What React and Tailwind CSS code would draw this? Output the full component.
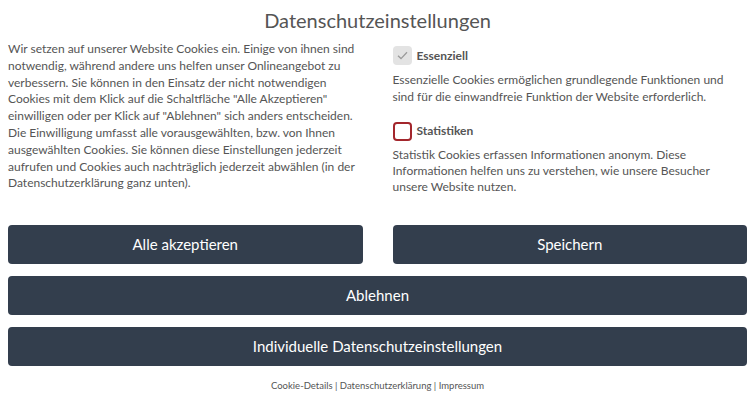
import { useState } from "react";

const font = { fontFamily: "Lato, 'Open Sans', sans-serif" };

const Checkbox = ({ checked, disabled, onChange }) => {
  if (disabled) {
    return (
      <span className="flex h-[19px] w-[19px] shrink-0 items-center justify-center rounded-[4px] bg-[#e3e3e3]">
        <svg width="11" height="9" viewBox="0 0 11 9" fill="none">
          <path d="M1 4.8 L4 7.6 L10 1.2" stroke="#9a9a9a" strokeWidth="1.3" />
        </svg>
      </span>
    );
  }
  return (
    <button
      onClick={onChange}
      className="flex h-[19px] w-[19px] shrink-0 items-center justify-center rounded-[4px] border-2 border-[#a3262c] bg-white"
    >
      {checked && (
        <svg width="11" height="9" viewBox="0 0 11 9" fill="none">
          <path d="M1 4.8 L4 7.6 L10 1.2" stroke="#a3262c" strokeWidth="1.5" />
        </svg>
      )}
    </button>
  );
};

export default function App() {
  const [stats, setStats] = useState(false);

  return (
    <div style={font} className="min-h-[398px] w-full bg-white px-2 text-[#555]">
      <h2 className="pt-[6px] text-center text-[20px] leading-7 text-[#555]">
        Datenschutzeinstellungen
      </h2>

      <div className="mt-[7px] grid grid-cols-2 gap-[30px]">
        {/* intro text */}
        <p className="text-[12px] leading-[16.8px]">
          Wir setzen auf unserer Website Cookies ein. Einige von ihnen sind notwendig, während
          andere uns helfen unser Onlineangebot zu verbessern. Sie können in den Einsatz der nicht
          notwendigen Cookies mit dem Klick auf die Schaltfläche "Alle Akzeptieren" einwilligen oder
          per Klick auf "Ablehnen" sich anders entscheiden. Die Einwilligung umfasst alle
          vorausgewählten, bzw. von Ihnen ausgewählten Cookies. Sie können diese Einstellungen
          jederzeit aufrufen und Cookies auch nachträglich jederzeit abwählen (in der
          Datenschutzerklärung ganz unten).
        </p>

        {/* cookie groups */}
        <div className="pt-[5px]">
          <label className="flex items-center gap-[5px]">
            <Checkbox checked disabled />
            <span className="text-[12px] font-bold text-[#555]">Essenziell</span>
          </label>
          <p className="mt-[7px] text-[12px] leading-[16.8px]">
            Essenzielle Cookies ermöglichen grundlegende Funktionen und sind für die einwandfreie
            Funktion der Website erforderlich.
          </p>

          <label className="mt-[16px] flex items-center gap-[5px]">
            <Checkbox checked={stats} onChange={() => setStats(!stats)} />
            <span className="text-[12px] font-bold text-[#555]">Statistiken</span>
          </label>
          <p className="mt-[6px] text-[12px] leading-[16px]">
            Statistik Cookies erfassen Informationen anonym. Diese Informationen helfen uns zu
            verstehen, wie unsere Besucher unsere Website nutzen.
          </p>
        </div>
      </div>

      {/* Buttons */}
      <div className="mt-[30px] flex flex-col gap-[12px]">
        <div className="grid grid-cols-2 gap-[30px]">
          <button className="h-[39px] rounded-[4px] bg-[#333e4d] text-[15px] text-white">
            Alle akzeptieren
          </button>
          <button className="h-[39px] rounded-[4px] bg-[#333e4d] text-[15px] text-white">
            Speichern
          </button>
        </div>
        <button className="h-[39px] rounded-[4px] bg-[#333e4d] text-[15px] text-white">
          Ablehnen
        </button>
        <button className="h-[39px] rounded-[4px] bg-[#333e4d] text-[15px] text-white">
          Individuelle Datenschutzeinstellungen
        </button>
      </div>

      <div className="mt-[14px] text-center text-[9.5px] leading-[12px] text-[#555]">
        <a href="#">Cookie-Details</a> | <a href="#">Datenschutzerklärung</a> |{" "}
        <a href="#">Impressum</a>
      </div>
    </div>
  );
}
